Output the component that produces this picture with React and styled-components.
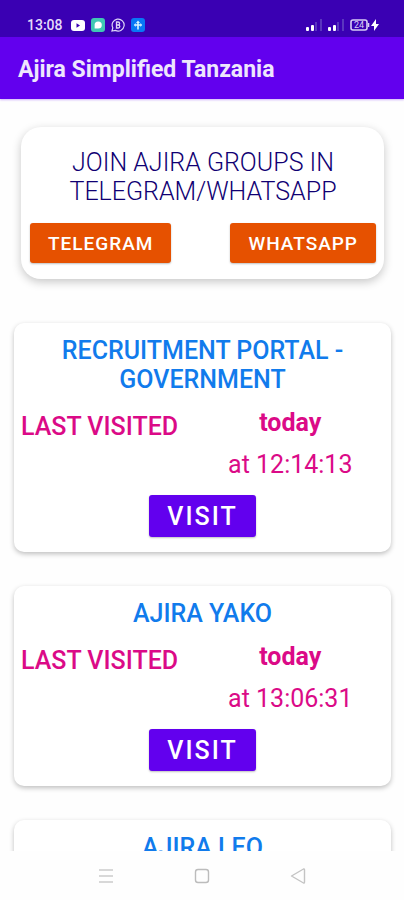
import React from 'react'
import styled, { createGlobalStyle } from 'styled-components'

const GlobalStyle = createGlobalStyle`
* {
  box-sizing: border-box;
}
body {
  margin: 0;
  background: #fefefe;
  font-family: Roboto, "Noto Sans", sans-serif;
}
h1, h2, p {
  margin: 0;
}
`

const Screen = styled.div`
display: flex;
flex-direction: column;
height: 100vh;
overflow: hidden;
`

const StatusBar = styled.div`
flex: none;
display: flex;
justify-content: space-between;
align-items: center;
padding: 15px 25px 2px 27px;
height: 37px;
color: #e4dcfa;
background: #3a00b3;
`

const StatusGroup = styled.div`
display: flex;
align-items: center;
gap: 6px;
svg {
  display: block;
}
`

const Clock = styled.span`
margin-right: 2px;
font-size: 14px;
line-height: 20px;
font-weight: 500;
`

const AppBar = styled.header`
flex: none;
display: flex;
align-items: center;
height: 62px;
padding: 4px 18px 0;
background: #6200ee;
box-shadow: 0 1px 2px rgba(98, 0, 238, 0.3);
`

const AppTitle = styled.h1`
font-size: 23px;
line-height: 30px;
font-weight: 700;
color: #eee6fd;
`

const Content = styled.main`
flex: 1;
min-height: 0;
overflow-y: auto;
scrollbar-width: none;
padding: 28px 13px 0 14px;
`

const JoinCard = styled.section`
margin: 0 7px 44px;
padding: 21px 8px 16px 9px;
background: #fff;
border-radius: 20px;
box-shadow: 0 3px 10px rgba(0, 0, 0, 0.22);
`

const JoinTitle = styled.h2`
font-size: 25px;
line-height: 29px;
font-weight: 350;
text-align: center;
color: #100073;
`

const ButtonRow = styled.div`
display: flex;
justify-content: space-between;
margin-top: 17px;
`

const Button = styled.button`
height: ${props => props.$large ? '42px' : '40px'};
padding: 0 18px;
border: none;
border-radius: 3px;
font-family: inherit;
font-size: ${props => props.$large ? '25px' : '19px'};
font-weight: 500;
letter-spacing: ${props => props.$large ? '2px' : '1px'};
color: #fff;
background: ${props => props.$large ? '#6200ee' : '#e65100'};
box-shadow: 0 1px 2px rgba(0, 0, 0, 0.25);
cursor: pointer;
`

const Card = styled.section`
display: flex;
flex-direction: column;
align-items: center;
margin-bottom: 34px;
padding: 13px 0 15px;
background: #fff;
border-radius: 10px;
box-shadow: 0 2px 5px rgba(0, 0, 0, 0.25);
`

const CardTitle = styled.h2`
padding: 0 40px;
font-size: 25px;
line-height: 29px;
font-weight: 500;
text-align: center;
color: #117bec;
`

const Visited = styled.div`
display: grid;
grid-template-columns: 1fr 1fr;
align-self: stretch;
margin: 14px 0 16px;
padding: 0 11px 0 7px;
color: #db0a87;
font-size: 25px;
line-height: 29px;
`

const VisitedLabel = styled.p`
padding-top: 4px;
font-weight: 500;
white-space: nowrap;
`

const VisitedWhen = styled.div`
display: flex;
flex-direction: column;
align-items: center;
gap: 13px;
`

const Day = styled.p`
font-weight: ${props => props.$bold ? 700 : 400};
`

const NavBar = styled.nav`
flex: none;
display: flex;
justify-content: center;
align-items: center;
gap: 72px;
height: 49px;
background: #fefefe;
`

const NavButton = styled.button`
display: flex;
padding: 0;
border: none;
background: none;
cursor: pointer;
`

const portals = [
    { name: 'RECRUITMENT PORTAL - GOVERNMENT', day: 'today', time: 'at 12:14:13' },
    { name: 'AJIRA YAKO', day: 'today', time: 'at 13:06:31' },
    { name: 'AJIRA LEO' },
]

function NotificationIcons() {
    return (
        <>
            <svg width="14" height="14" viewBox="0 0 14 14">
                <rect x="0" y="2" width="14" height="11" rx="3" fill="#fff" />
                <path d="M5.5 5.3v4.4L9 7.5z" fill="#3a00b3" />
            </svg>
            <svg width="14" height="14" viewBox="0 0 14 14">
                <rect width="14" height="14" rx="3" fill="#3fc7b4" />
                <path d="M3.6 10.6V7A3.6 3.6 0 1 1 7.2 10.6z" fill="#fff" />
            </svg>
            <svg width="14" height="14" viewBox="0 0 14 14" fill="none" stroke="#ded5f7">
                <path d="M1 13l.8-3.2A6 6 0 1 1 4.4 12.4z" strokeWidth="1.2" />
                <path d="M5.5 4v6h1.8a1.5 1.5 0 0 0 0-3H5.5h1.6a1.5 1.5 0 0 0 0-3z" strokeWidth="1.3" />
            </svg>
            <svg width="14" height="14" viewBox="0 0 14 14">
                <rect width="14" height="14" rx="3" fill="#0878f5" />
                <path d="M7 2.5L9 5H7.8v1.2h1.6V5l1.8 2-1.8 2V7.8H7.8v3.7H6.2V7.8H4.6V9L2.8 7l1.8-2v1.2h1.6V5H5z" fill="#d7f5ff" />
            </svg>
        </>
    )
}

function Signal() {
    return (
        <svg width="16" height="12" viewBox="0 0 16 12">
            <rect x="0" y="8" width="3" height="4" rx="1" fill="#fff" />
            <rect x="5" y="6" width="3" height="6" rx="1" fill="#fff" />
            <rect x="9" y="3" width="2" height="9" fill="#5a35bf" />
            <rect x="14" y="0" width="2" height="12" fill="#5a35bf" />
        </svg>
    )
}

function Battery() {
    return (
        <svg width="29" height="12" viewBox="0 0 29 12">
            <rect x="1" y="1" width="16" height="10" rx="2" fill="none" stroke="#d8cdf5" strokeWidth="1.6" />
            <path d="M18.6 4v4" stroke="#d8cdf5" strokeWidth="1.4" />
            <text x="9" y="9" fontSize="9" textAnchor="middle" fill="#d8cdf5">24</text>
            <path d="M26 0l-5 7h3v5l5-7h-3z" fill="#fff" />
        </svg>
    )
}

function PortalCard({ name, day, time }) {
    return (
        <Card>
            <CardTitle>{name}</CardTitle>
            {day && (
                <Visited>
                    <VisitedLabel>LAST VISITED</VisitedLabel>
                    <VisitedWhen>
                        <Day $bold>{day}</Day>
                        <Day>{time}</Day>
                    </VisitedWhen>
                </Visited>
            )}
            {day && <Button $large>VISIT</Button>}
        </Card>
    )
}

export default function App() {
    return (
        <Screen>
            <GlobalStyle />
            <StatusBar>
                <StatusGroup>
                    <Clock>13:08</Clock>
                    <NotificationIcons />
                </StatusGroup>
                <StatusGroup>
                    <Signal />
                    <Signal />
                    <Battery />
                </StatusGroup>
            </StatusBar>
            <AppBar>
                <AppTitle>Ajira Simplified Tanzania</AppTitle>
            </AppBar>
            <Content>
                <JoinCard>
                    <JoinTitle>JOIN AJIRA GROUPS IN TELEGRAM/WHATSAPP</JoinTitle>
                    <ButtonRow>
                        <Button>TELEGRAM</Button>
                        <Button>WHATSAPP</Button>
                    </ButtonRow>
                </JoinCard>
                {portals.map(portal => <PortalCard key={portal.name} {...portal} />)}
            </Content>
            <NavBar>
                <NavButton aria-label="Recent apps">
                    <svg width="24" height="24" viewBox="0 0 24 24" fill="none" stroke="#cbcbcb" strokeWidth="1.4">
                        <path d="M5 6h14M5 12h14M5 18h14" />
                    </svg>
                </NavButton>
                <NavButton aria-label="Home">
                    <svg width="24" height="24" viewBox="0 0 24 24" fill="none" stroke="#bcbcbc" strokeWidth="1.4">
                        <rect x="5.5" y="5.5" width="13" height="13" rx="2.5" />
                    </svg>
                </NavButton>
                <NavButton aria-label="Back">
                    <svg width="24" height="24" viewBox="0 0 24 24" fill="none" stroke="#c4c4c4" strokeWidth="1.4" strokeLinejoin="round">
                        <path d="M17.5 5L5.5 12L17.5 19q1 .3 1-1V6q0-1.3-1-1z" />
                    </svg>
                </NavButton>
            </NavBar>
        </Screen>
    )
}
